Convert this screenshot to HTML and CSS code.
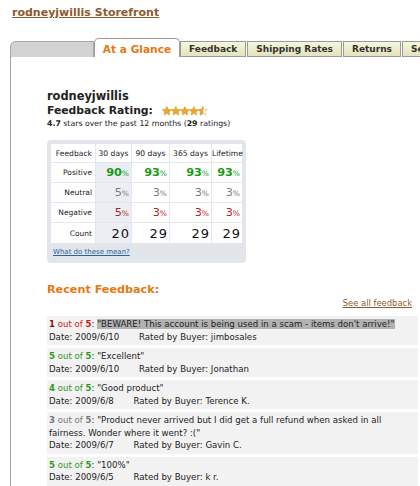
FILE: index.html
```html
<!doctype html>
<html>
  <head>
    <title>rodneyjwillis Storefront</title>
    <link rel="stylesheet" href="styles.css">
  </head>
  <body>
    <div class="page">
      <h1 class="store-title"><a href="#">rodneyjwillis Storefront</a></h1>

      <div class="tabs">
        <div class="tab-filler"></div>
        <a class="tab active" href="#">At a Glance</a>
        <a class="tab" href="#">Feedback</a>
        <a class="tab" href="#">Shipping Rates</a>
        <a class="tab" href="#">Returns</a>
        <a class="tab" href="#">Seller Help</a>
      </div>

      <div class="panel">
        <div class="seller">
          <div class="seller-name">rodneyjwillis</div>
          <div class="rating-title">
            Feedback Rating:
            <svg class="stars" viewBox="0 0 47 10">
              <defs>
                <path id="star" d="M5 0.4l1.3 3 3.3 0.3-2.5 2.2 0.8 3.3-2.9-1.8-2.9 1.8 0.8-3.3-2.5-2.2 3.3-0.3z" />
                <clipPath id="half"><rect x="0" y="0" width="5.4" height="10" /></clipPath>
              </defs>
              <use href="#star" x="0" class="star-full" />
              <use href="#star" x="9.2" class="star-full" />
              <use href="#star" x="18.4" class="star-full" />
              <use href="#star" x="27.6" class="star-full" />
              <g transform="translate(36.8 0)">
                <use href="#star" class="star-empty" />
                <use href="#star" class="star-full" clip-path="url(#half)" />
              </g>
            </svg>
          </div>
          <div class="rating-summary">
            <b>4.7</b> stars over the past 12 months (<b>29</b> ratings)
          </div>
        </div>

        <div class="stats-box">
          <table class="stats">
            <tr class="stats-head">
              <td class="label">Feedback</td>
              <td>30 days</td>
              <td>90 days</td>
              <td>365 days</td>
              <td>Lifetime</td>
            </tr>
            <tr class="positive">
              <td class="label">Positive</td>
              <td class="recent"><b>90</b><small>%</small></td>
              <td><b>93</b><small>%</small></td>
              <td><b>93</b><small>%</small></td>
              <td><b>93</b><small>%</small></td>
            </tr>
            <tr class="neutral">
              <td class="label">Neutral</td>
              <td class="recent">5<small>%</small></td>
              <td>3<small>%</small></td>
              <td>3<small>%</small></td>
              <td>3<small>%</small></td>
            </tr>
            <tr class="negative">
              <td class="label">Negative</td>
              <td class="recent">5<small>%</small></td>
              <td>3<small>%</small></td>
              <td>3<small>%</small></td>
              <td>3<small>%</small></td>
            </tr>
            <tr class="count">
              <td class="label">Count</td>
              <td class="recent">20</td>
              <td>29</td>
              <td>29</td>
              <td>29</td>
            </tr>
          </table>
          <a class="stats-help" href="#">What do these mean?</a>
        </div>

        <h2 class="recent-title">Recent Feedback:</h2>
        <div class="see-all"><a href="#">See all feedback</a></div>

        <ul class="feedback-list">
          <li class="feedback">
            <div>
              <span class="score bad"><b class="given">1</b> out of <b>5</b></span>:
              <span class="quote flagged">"BEWARE! This account is being used in a scam - items don't arrive!"</span>
            </div>
            <div>Date: 2009/6/10 <span class="buyer">Rated by Buyer: jimbosales</span></div>
          </li>
          <li class="feedback">
            <div><span class="score good"><b>5</b> out of <b>5</b></span>: "Excellent"</div>
            <div>Date: 2009/6/10 <span class="buyer">Rated by Buyer: Jonathan</span></div>
          </li>
          <li class="feedback">
            <div><span class="score good"><b>4</b> out of <b>5</b></span>: "Good product"</div>
            <div>Date: 2009/6/8 <span class="buyer">Rated by Buyer: Terence K.</span></div>
          </li>
          <li class="feedback">
            <div>
              <span class="score okay"><b>3</b> out of <b>5</b></span>: "Product never arrived but I did get a full refund when asked in all
              fairness. Wonder where it went? :("
            </div>
            <div>Date: 2009/6/7 <span class="buyer">Rated by Buyer: Gavin C.</span></div>
          </li>
          <li class="feedback">
            <div><span class="score good"><b>5</b> out of <b>5</b></span>: "100%"</div>
            <div>Date: 2009/6/5 <span class="buyer">Rated by Buyer: k r.</span></div>
          </li>
        </ul>
      </div>
    </div>
  </body>
</html>
```

FILE: styles.css
```css
:root {
  --link-brown: #8c5a2c;
  --orange: #e47911;
  --tab-border: #9a9a9a;
  --text: #222222;
}

html,
body {
  margin: 0;
  overflow: hidden;
}

body {
  font-family: "DejaVu Sans", Verdana, sans-serif;
  color: var(--text);
  background: #ffffff;
}

.page {
  width: 420px;
  height: 486px;
}

.store-title {
  margin: 0;
  padding: 6px 0 0 12px;
  height: 33px;
  box-sizing: border-box;
  font-size: 11px;
  line-height: 14px;
}

.store-title a {
  color: var(--link-brown);
}

/* tab strip */
.tabs {
  display: flex;
  align-items: flex-end;
  height: 24px;
  padding-left: 10px;
  white-space: nowrap;
  overflow: hidden;
}

.tab-filler {
  flex-shrink: 0;
  width: 84px;
  height: 16px;
  box-sizing: border-box;
  background: #d2d2d2;
  border: 1px solid #a8a8a8;
  border-bottom: none;
  border-top-left-radius: 6px;
}

.tab {
  flex-shrink: 0;
  height: 16px;
  box-sizing: border-box;
  margin-left: 1px;
  padding: 0 8px;
  border: 1px solid var(--tab-border);
  background: linear-gradient(#f6f6de, #e3e3bf);
  color: #333;
  font-size: 9px;
  font-weight: bold;
  line-height: 14px;
  text-decoration: none;
}

.tab.active {
  margin-left: 0;
  width: 86px;
  height: 19px;
  padding: 2px 0 0;
  text-align: center;
  background: #ffffff;
  border-bottom: none;
  border-radius: 5px 5px 0 0;
  color: var(--orange);
  font-size: 10.6px;
  line-height: 16px;
}

.tab.active + .tab {
  margin-left: 0;
}

/* main panel */
.panel {
  margin-left: 10px;
  border-left: 1px solid #a0a0a0;
  height: 430px;
  padding: 33px 0 0 36px;
  box-sizing: border-box;
}

.seller-name {
  font-size: 11.4px;
  font-weight: bold;
  line-height: 13px;
}

.rating-title {
  font-size: 10.8px;
  font-weight: bold;
  line-height: 15px;
  display: flex;
  align-items: center;
  gap: 9px;
}

.stars {
  width: 46px;
  height: 10px;
}

.star-full {
  fill: #f2a81e;
  stroke: #c98410;
  stroke-width: 0.5;
}

.star-empty {
  fill: #ffffff;
  stroke: #c9a060;
  stroke-width: 0.5;
}

.rating-summary {
  font-size: 7.8px;
  line-height: 12px;
}

/* stats table */
.stats-box {
  margin-top: 10px;
  width: 199px;
  box-sizing: border-box;
  padding: 4px 4px 6px;
  background: #e2e5ea;
  border-radius: 4px;
}

.stats {
  width: 191px;
  border-collapse: separate;
  border-spacing: 0;
  background: #ffffff;
  table-layout: fixed;
}

.stats tr {
  height: 20px;
}

.stats tr.stats-head {
  height: 19px;
}

.stats td {
  padding: 0 2px 0 0;
  text-align: right;
  border-right: 1px solid #e4e7ec;
  border-bottom: 1px solid #e4e7ec;
  font-size: 7.5px;
  white-space: nowrap;
}

.stats td:last-child {
  border-right: none;
}

.stats tr:last-child td {
  border-bottom: none;
}

.stats tr > td:nth-child(1) { width: 41px; }
.stats tr > td:nth-child(2) { width: 35px; }
.stats tr > td:nth-child(3) { width: 37px; }
.stats tr > td:nth-child(4) { width: 41px; }

.stats-head td {
  text-align: center;
  padding: 0;
  font-size: 7.6px;
}

.stats-head td.label {
  text-align: right;
  padding-right: 3px;
}

.stats td.label {
  padding-right: 3px;
}

.stats td.recent {
  background: #eceef4;
}

.stats td b,
.stats .neutral td:not(.label),
.stats .negative td:not(.label) {
  font-size: 11.3px;
}

.stats small {
  font-size: 7.5px;
}

.positive td:not(.label) {
  color: #179a17;
}

.neutral td:not(.label) {
  color: #7a7a7a;
}

.negative td:not(.label) {
  color: #b01e1e;
}

.count td:not(.label) {
  color: #111;
  font-size: 13px;
  letter-spacing: 1px;
  padding-right: 1px;
}

.stats-help {
  display: block;
  margin-top: 4px;
  padding-left: 2px;
  color: #2f5f9f;
  font-size: 7px;
  line-height: 10px;
}

/* recent feedback */
.recent-title {
  margin: 20px 0 0;
  color: var(--orange);
  font-size: 11.2px;
  line-height: 14px;
}

.see-all {
  width: 365px;
  text-align: right;
  font-size: 8.4px;
  line-height: 10px;
  margin-top: 1px;
}

.see-all a {
  color: var(--link-brown);
}

.feedback-list {
  list-style: none;
  margin: 8px 0 0;
  padding: 0;
  width: 371px;
}

.feedback {
  background: #f2f2f2;
  padding: 2px 3px 2px 2px;
  margin-bottom: 3px;
  font-size: 8.6px;
  line-height: 12.5px;
}

.score.bad {
  color: #cc1a1a;
}

.score.bad .given {
  color: #8c0d0d;
}

.score.good {
  color: #2f9a1e;
}

.score.okay {
  color: #777;
}

.quote.flagged {
  background: #b2b2b2;
}

.buyer {
  margin-left: 17px;
}
```
